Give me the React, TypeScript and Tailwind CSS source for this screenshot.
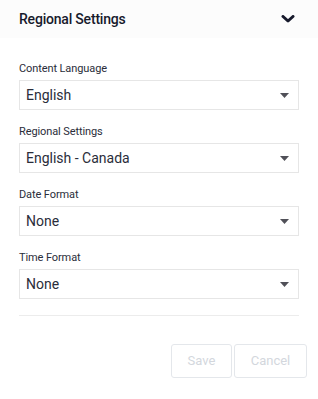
import React from "react";

const fields = [
  { label: "Content Language", value: "English" },
  { label: "Regional Settings", value: "English - Canada" },
  { label: "Date Format", value: "None" },
  { label: "Time Format", value: "None" },
];

function Caret() {
  return (
    <svg width="9" height="5" viewBox="0 0 9 5" className="shrink-0">
      <path d="M0 0 L9 0 L4.5 5 Z" fill="#505058" />
    </svg>
  );
}

export default function App() {
  return (
    <div
      className="w-[318px] h-[399px] bg-white"
      style={{ fontFamily: "Roboto, 'Liberation Sans', sans-serif" }}
    >
      <div className="h-[38px] bg-[#fcfcfc] flex items-center justify-between pl-[19px] pr-[23px]">
        <span className="text-[14px] font-medium text-[#171a2c] tracking-[-0.2px]">
          Regional Settings
        </span>
        <svg width="14" height="8" viewBox="0 0 14 8">
          <path
            d="M2 1.5 L7 6 L12 1.5"
            fill="none"
            stroke="#171a2c"
            strokeWidth="3"
            strokeLinecap="round"
            strokeLinejoin="round"
          />
        </svg>
      </div>
      <div className="px-[19px] pt-[24px] flex flex-col gap-[15px]">
        {fields.map((f) => (
          <div key={f.label} className="flex flex-col">
            <div className="text-[11px] text-[#2a2d3a] leading-[13px] mb-[5px] tracking-[-0.1px]">
              {f.label}
            </div>
            <div className="h-[30px] border border-[#e6e6e6] flex items-center justify-between pl-[6px] pr-[9px]">
              <span className="text-[14px] text-[#2a2d3a]">{f.value}</span>
              <Caret />
            </div>
          </div>
        ))}
      </div>
      <div className="mx-[19px] mt-[16px] border-t border-[#ececec]" />
      <div className="flex justify-end gap-[2px] pr-[11px] mt-[28px]">
        <button className="w-[61px] h-[34px] border border-[#e4e7eb] rounded-[3px] text-[13px] text-[#d3d7dd] bg-white">
          Save
        </button>
        <button className="w-[73px] h-[34px] border border-[#e4e7eb] rounded-[3px] text-[13px] text-[#d3d7dd] bg-white">
          Cancel
        </button>
      </div>
    </div>
  );
}
